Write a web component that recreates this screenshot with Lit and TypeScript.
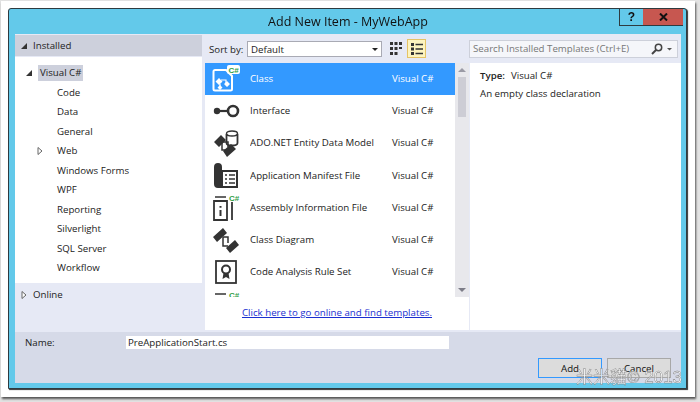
import { LitElement, html, css, svg } from 'lit'
import { customElement } from 'lit/decorators.js'

const csharp = (x: number, y: number, color = '#2f9e44') => svg`
  <text x="${x}" y="${y}" font-family="Liberation Sans, sans-serif" font-size="8" font-weight="700" fill="${color}">C#</text>`

const icons: Record<string, unknown> = {
  cls: svg`
    <path d="M3 5h11l6 6v13a1.500 1.500 0 0 1-1.500 1.500H3A1.500 1.500 0 0 1 1.500 24V6.500A1.500 1.500 0 0 1 3 5z" fill="none" stroke="#fff" stroke-width="2"/>
    <rect x="15" y="0" width="13" height="9" rx="2" fill="#fff"/>
    ${csharp(16.5, 7.5)}
    <path d="M7 13l3.500 3.500L7 20l-3.500-3.500zM15 16l3 3-3 3-3-3zM8 20l2.500 2.500L8 25l-2.500-2.500z" fill="#fff"/>
    <path d="M9 15h5v3M8 19v3" fill="none" stroke="#fff" stroke-width="1.200"/>`,
  iface: svg`
    <circle cx="5" cy="14" r="3.200" fill="#333"/>
    <path d="M5 14h12" stroke="#333" stroke-width="2.200"/>
    <circle cx="21" cy="14" r="5" fill="none" stroke="#333" stroke-width="2.600"/>`,
  ado: svg`
    <ellipse cx="20" cy="3.500" rx="5.500" ry="2.500" fill="#fff" stroke="#333" stroke-width="1.400"/>
    <path d="M14.500 4v9c0 1.500 2.500 2.500 5.500 2.500s5.500-1 5.500-2.500V4" fill="none" stroke="#333" stroke-width="1.800"/>
    <path d="M2 12l7-7 5 5-7 7zM11 21l8-7 5 5-9 8z" fill="#333"/>
    <path d="M10 12h6v5M10 12v8h4" fill="none" stroke="#333" stroke-width="1.500"/>`,
  manifest: svg`
    <path d="M2 5a4 4 0 0 1 8 0v3H26v18H6a4 4 0 0 1-4-4z" fill="#333"/>
    <rect x="10.500" y="9.500" width="14" height="15" fill="#fff" stroke="#333"/>
    <path d="M13 13h2M17 13h6M13 17h2M17 17h6M13 21h2M17 21h6" stroke="#333" stroke-width="1.600"/>`,
  asm: svg`
    <path d="M3 3h11" stroke="#333" stroke-width="1.500"/>
    ${csharp(17, 6.500)}
    <path d="M2 7h13v19H2z" fill="none" stroke="#333" stroke-width="1.800"/>
    <path d="M20 8v18" stroke="#333" stroke-width="1.800"/>
    <path d="M8.500 12v1.800M8.500 16v6" stroke="#333" stroke-width="2"/>`,
  diagram: svg`
    <path d="M1 10l10-9 4 5-10 9zM14 21l9-8 4 5-9 8z" fill="#333"/>
    <path d="M11 10h5v6M11 10v9h5" fill="none" stroke="#333" stroke-width="1.500"/>`,
  rule: svg`
    <rect x="4" y="2" width="20" height="22" fill="none" stroke="#333" stroke-width="1.800"/>
    <circle cx="14" cy="10.500" r="4" fill="none" stroke="#333" stroke-width="2"/>
    <path d="M11.500 14l-1 6 3.500-2 3.500 2-1-6z" fill="#333"/>`,
}

const folders = ['Code', 'Data', 'General', 'Web', 'Windows Forms', 'WPF', 'Reporting', 'Silverlight', 'SQL Server', 'Workflow']

const templates = [
  { icon: 'cls', name: 'Class', lang: 'Visual C#' },
  { icon: 'iface', name: 'Interface', lang: 'Visual C#' },
  { icon: 'ado', name: 'ADO.NET Entity Data Model', lang: 'Visual C#' },
  { icon: 'manifest', name: 'Application Manifest File', lang: 'Visual C#' },
  { icon: 'asm', name: 'Assembly Information File', lang: 'Visual C#' },
  { icon: 'diagram', name: 'Class Diagram', lang: 'Visual C#' },
  { icon: 'rule', name: 'Code Analysis Rule Set', lang: 'Visual C#' },
  { icon: 'asm', name: '', lang: '' },
]

@customElement('app-root')
export class AppRoot extends LitElement {
  static styles = css`
    :host {
      display: block;
      width: 700px;
      height: 402px;
      overflow: hidden;
      background: #e2e2e2;
      font-family: 'Open Sans', 'Noto Sans', sans-serif;
      font-size: 9.700px;
      color: #222;
    }
    .frame {
      width: 694px;
      height: 396px;
      margin: 1px 0 0 1px;
      padding: 7px 0 0 7px;
      box-sizing: border-box;
      background: #fff;
      box-shadow: 1px 2px 2px #555;
    }
    .window {
      position: relative;
      width: 679px;
      height: 381px;
      box-sizing: border-box;
      padding: 0 5px 5px 6px;
      display: flex;
      flex-direction: column;
      background: #63c9ea;
      border: 1px solid #2e3b40;
      border-radius: 3px 3px 0 0;
      box-shadow: 1px 1px 1px #333;
      filter: blur(0.3px);
    }
    .titlebar {
      height: 25px;
      flex: none;
      display: grid;
      grid-template-columns: 1fr auto 1fr;
    }
    .title {
      grid-column: 2;
      font-size: 12.500px;
      line-height: 25px;
      color: #111;
    }
    .controls {
      grid-column: 3;
      justify-self: end;
      display: flex;
      height: 17px;
      margin-right: -2px;
    }
    .help, .close {
      display: flex;
      align-items: center;
      justify-content: center;
      box-sizing: border-box;
      font-family: 'Liberation Sans', sans-serif;
      font-weight: 700;
      color: #111;
    }
    .help {
      width: 24px;
      font-size: 12px;
      border-left: 1px solid #2e3b40;
      border-bottom: 1px solid #2e3b40;
    }
    .close {
      width: 40px;
      background: #c75750;
      border-bottom: 1px solid #2e3b40;
    }
    .content {
      flex: 1;
      display: flex;
      flex-direction: column;
      background: #e6e9f5;
    }
    .top {
      height: 296px;
      display: flex;
    }
    .left {
      width: 187px;
      flex: none;
      padding-top: 1px;
    }
    .section {
      display: flex;
      align-items: center;
      height: 21px;
      padding-left: 6px;
      gap: 6px;
    }
    .section.head {
      background: #cdd0dc;
    }
    .online {
      margin-top: 1px;
    }
    .tree {
      height: 220px;
      padding-top: 6px;
      margin-top: 1px;
      background: #fff;
      margin-bottom: 1px;
    }
    .tree-row {
      display: flex;
      align-items: center;
      height: 19.500px;
    }
    .lang-row {
      padding-left: 11px;
      gap: 6px;
    }
    .selected-node {
      background: #cdd0dc;
      padding: 0 2px;
      height: 16px;
      line-height: 16px;
    }
    .folder {
      padding-left: 42px;
    }
    .arrow {
      position: relative;
      width: 6px;
      flex: none;
    }
    .expander {
      position: absolute;
      left: 28px;
      margin-top: 1px;
    }
    .middle {
      flex: 1;
      min-width: 0;
      display: flex;
      flex-direction: column;
    }
    .toolbar {
      height: 29px;
      flex: none;
      display: flex;
      align-items: center;
      box-sizing: border-box;
      padding: 0 3px 0 7px;
    }
    .sort-label {
      width: 38px;
      flex: none;
      margin-top: 1px;
    }
    .select {
      width: 135px;
      height: 16px;
      box-sizing: border-box;
      display: flex;
      align-items: center;
      justify-content: space-between;
      padding: 0 3px;
      background: #fff;
      border: 1px solid #a9aab4;
      margin-top: 1px;
    }
    .view-grid {
      margin-left: 8px;
      display: block;
    }
    .view-list {
      margin-left: 5px;
      width: 19px;
      height: 19px;
      box-sizing: border-box;
      display: flex;
      align-items: center;
      justify-content: center;
      background: #fdf4bf;
      border: 1px solid #e5c365;
    }
    .search {
      margin-left: auto;
      width: 209px;
      height: 18px;
      box-sizing: border-box;
      display: flex;
      align-items: center;
      justify-content: space-between;
      padding: 0 4px 0 3px;
      color: #777;
      background: #f5f6fa;
      border: 1px solid #cdd0da;
    }
    .search svg {
      display: block;
    }
    .panes {
      flex: 1;
      display: flex;
      min-height: 0;
    }
    .center {
      width: 264px;
      flex: none;
      margin-left: 3px;
      background: #fff;
      display: flex;
      flex-direction: column;
    }
    .list-area {
      height: 234px;
      flex: none;
      display: flex;
    }
    .list {
      flex: 1;
      overflow: hidden;
    }
    .item {
      height: 32.300px;
      display: flex;
      align-items: center;
      padding-left: 7px;
    }
    .item.active {
      background: #3399ff;
      color: #fff;
    }
    .item svg {
      display: block;
      flex: none;
    }
    .item-name {
      margin: 0 0 2px 10px;
      width: 142px;
      white-space: nowrap;
      overflow: hidden;
    }
    .item-lang {
      margin-bottom: 2px;
    }
    .scroll {
      width: 14px;
      flex: none;
      background: #e8e8ec;
      display: flex;
      flex-direction: column;
      align-items: center;
      padding-top: 5px;
      box-sizing: border-box;
    }
    .thumb {
      width: 8px;
      height: 40px;
      margin-top: 5px;
      background: #cdcdd5;
    }
    .scroll-down {
      margin-top: auto;
      margin-bottom: 5px;
    }
    .online-link {
      flex: 1;
      display: flex;
      align-items: center;
      justify-content: center;
      color: #1a2fd0;
      text-decoration: underline;
      margin-top: 1px;
      padding-bottom: 3px;
      box-sizing: border-box;
    }
    .details {
      flex: 1;
      margin-left: 1px;
      background: #fff;
      padding: 2px 10px;
    }
    .type {
      display: flex;
      gap: 6px;
      height: 20px;
      align-items: center;
    }
    .type b {
      font-weight: 600;
    }
    .desc {
      line-height: 18px;
    }
    .footer {
      flex: 1;
      margin-top: 2px;
      background: #d6dae8;
      box-sizing: border-box;
      padding: 4px 10px 5px;
      display: flex;
      flex-direction: column;
    }
    .name-row {
      display: flex;
      align-items: center;
      height: 13px;
    }
    .name-label {
      width: 101px;
      flex: none;
    }
    .name-input {
      width: 323px;
      height: 13px;
      line-height: 13px;
      box-sizing: border-box;
      padding-left: 2px;
      background: #fff;
    }
    .buttons {
      margin-top: auto;
      display: flex;
      justify-content: flex-end;
      gap: 5px;
    }
    .btn {
      width: 64px;
      height: 20px;
      box-sizing: border-box;
      display: flex;
      align-items: center;
      justify-content: center;
      background: #dcdcdc;
      border: 1px solid #a8a8a8;
      color: #111;
    }
    .btn.primary {
      border-color: #3399ff;
    }
    .watermark {
      position: absolute;
      left: 567px;
      top: 359px;
      font-family: 'Liberation Sans', 'Noto Sans CJK TC', sans-serif;
      font-size: 17px;
      line-height: 20px;
      white-space: nowrap;
      color: rgba(255, 255, 255, 0.75);
      -webkit-text-stroke: 0.4px #777;
    }
  `

  private tri(open: boolean) {
    return open
      ? html`<svg class="arrow" width="6" height="6" viewBox="0 0 6 6"><path d="M6 0v6H0z" fill="#333"/></svg>`
      : html`<svg class="arrow" width="5" height="8" viewBox="0 0 5 8"><path d="M.5 .5l4 3.500-4 3.500z" fill="#fff" stroke="#666"/></svg>`
  }

  render() {
    return html`
      <div class="frame">
        <div class="window">
          <div class="titlebar">
            <div class="title">Add New Item - MyWebApp</div>
            <div class="controls">
              <div class="help">?</div>
              <div class="close">
                <svg width="9" height="8" viewBox="0 0 9 8"><path d="M1 .5l7 7M8 .5l-7 7" stroke="#111" stroke-width="2"/></svg>
              </div>
            </div>
          </div>
          <div class="content">
            <div class="top">
              <div class="left">
                <div class="section head">${this.tri(true)}<span>Installed</span></div>
                <div class="tree">
                  <div class="tree-row lang-row">${this.tri(true)}<span class="selected-node">Visual C#</span></div>
                  ${folders.map(
                    (f) => html`<div class="tree-row folder">
                      ${f === 'Web' ? html`<span class="expander">${this.tri(false)}</span>` : ''}
                      <span>${f}</span>
                    </div>`,
                  )}
                </div>
                <div class="section online">${this.tri(false)}<span>Online</span></div>
              </div>
              <div class="middle">
                <div class="toolbar">
                  <span class="sort-label">Sort by:</span>
                  <div class="select">
                    <span>Default</span>
                    <svg width="6" height="3" viewBox="0 0 6 3"><path d="M0 0h6L3 3z" fill="#222"/></svg>
                  </div>
                  <svg class="view-grid" width="12" height="13" viewBox="0 0 12 13" fill="#333">
                    <path d="M0 0h3v3H0zM4.500 0h3v3h-3zM9 0h3v3H9zM0 5h3v3H0zM4.500 5h3v3h-3zM9 5h3v2H9zM0 10h3v3H0zM4.500 10h3v3h-3z"/>
                  </svg>
                  <div class="view-list">
                    <svg width="12" height="12" viewBox="0 0 12 12" fill="#333">
                      <path d="M0 0h3v3H0zM4.500 .8H12v1.400H4.500zM0 4.500h3v3H0zM4.500 5.300H12v1.400H4.500zM0 9h3v3H0zM4.500 9.800H12v1.400H4.500z"/>
                    </svg>
                  </div>
                  <div class="search">
                    <span>Search Installed Templates (Ctrl+E)</span>
                    <svg width="22" height="12" viewBox="0 0 22 12">
                      <circle cx="7.500" cy="4.500" r="3.200" fill="none" stroke="#444" stroke-width="1.500"/>
                      <path d="M5 7l-4 4" stroke="#444" stroke-width="2"/>
                      <path d="M16 5h5l-2.500 2.500z" fill="#555"/>
                    </svg>
                  </div>
                </div>
                <div class="panes">
                  <div class="center">
                    <div class="list-area">
                      <div class="list">
                        ${templates.map(
                          (t, i) => html`<div class="item ${i === 0 ? 'active' : ''}">
                            <svg width="28" height="28" viewBox="0 0 28 28">${icons[t.icon]}</svg>
                            <span class="item-name">${t.name}</span>
                            <span class="item-lang">${t.lang}</span>
                          </div>`,
                        )}
                      </div>
                      <div class="scroll">
                        <svg width="8" height="4" viewBox="0 0 8 4"><path d="M4 0l4 4H0z" fill="#9a9aa5"/></svg>
                        <div class="thumb"></div>
                        <svg class="scroll-down" width="8" height="4" viewBox="0 0 8 4"><path d="M0 0h8L4 4z" fill="#7d7d88"/></svg>
                      </div>
                    </div>
                    <div class="online-link">Click here to go online and find templates.</div>
                  </div>
                  <div class="details">
                    <div class="type"><b>Type:</b><span>Visual C#</span></div>
                    <div class="desc">An empty class declaration</div>
                  </div>
                </div>
              </div>
            </div>
            <div class="footer">
              <div class="name-row">
                <span class="name-label">Name:</span>
                <div class="name-input">PreApplicationStart.cs</div>
              </div>
              <div class="buttons">
                <div class="btn primary">Add</div>
                <div class="btn">Cancel</div>
              </div>
            </div>
          </div>
          <div class="watermark">米米貓© 2013</div>
        </div>
      </div>
    `
  }
}
